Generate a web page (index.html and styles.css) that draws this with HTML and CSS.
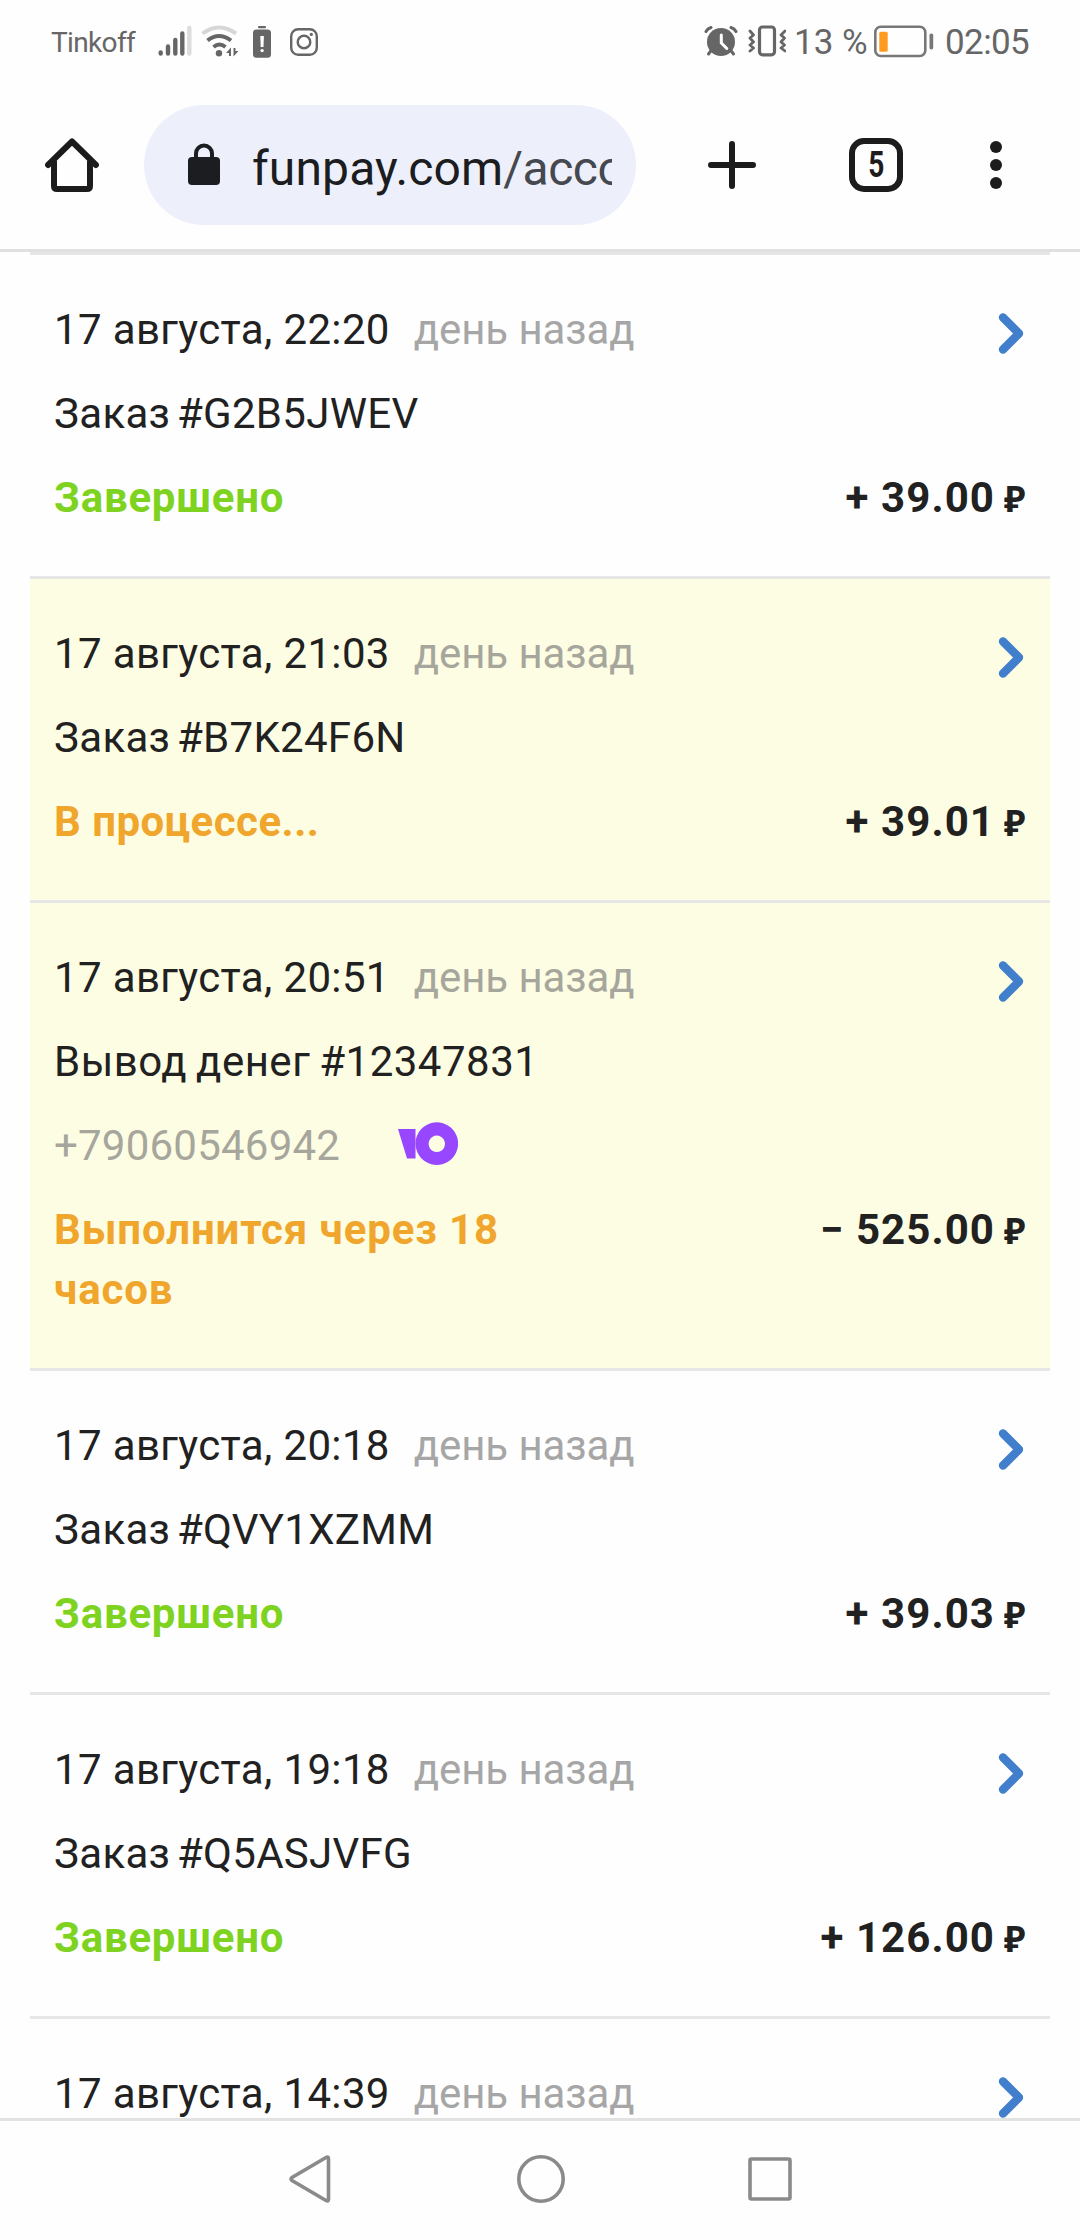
FILE: index.html
```html
<!DOCTYPE html>
<html lang="ru">
<head>
<meta charset="utf-8">
<title>FunPay</title>
<link rel="stylesheet" href="styles.css">
</head>
<body>
<svg class="sprite" aria-hidden="true">
  <symbol id="chevron" viewBox="0 0 28 52"><path d="M5 13.5 21 29.5 5 45.5" fill="none" stroke="#417fcc" stroke-width="8.4" stroke-linecap="round" stroke-linejoin="round"/></symbol>
</svg>
<div class="screen">
  <header class="status-bar">
    <div class="status-left">
      <span class="carrier">Tinkoff</span>
      <svg class="signal" width="34" height="36" viewBox="158 22 34 36" fill="none" stroke="#666" stroke-width="4.4" stroke-linecap="round">
        <path d="M160.7 51.5v1M168 45.500v7M175.300 39v13.500M182.300 32.500v20"/><path d="M189.300 27v25.500" stroke="#dcdcdc"/>
      </svg>
      <svg class="wifi" width="40" height="36" viewBox="200 22 40 36" fill="none" stroke="#666" stroke-width="4">
        <path d="M202.500 32.500Q219 20.500 236 32.500" stroke="#d6d6d6"/>
        <path d="M207.500 39.500Q219 30.500 231 39.500M213.500 46Q219.500 41 225.500 46"/>
        <circle cx="219" cy="52.300" r="3.200" fill="#666" stroke="none"/>
        <path d="M226 52l5-5.500V55h-2v-3zM238.500 50l-5 5.500V47h2v3z" fill="#666" stroke="none"/>
      </svg>
      <svg class="battery-alert" width="20" height="36" viewBox="252 22 20 36">
        <rect x="258" y="25" width="8" height="2.200" rx="1" fill="#666"/><rect x="253" y="28.500" width="18" height="28.300" rx="3.500" fill="#666"/>
        <path d="M260.300 35h3.600l-.4 11h-2.800z" fill="#fff"/><circle cx="262.100" cy="49.600" r="1.700" fill="#fff"/>
      </svg>
      <svg class="insta" width="30" height="36" viewBox="289 22 30 36" fill="none" stroke="#666" stroke-width="2.400">
        <rect x="291.200" y="28.200" width="25.600" height="25.600" rx="7"/><circle cx="304" cy="41" r="6.300"/><circle cx="311.300" cy="33.400" r="1.600" fill="#666" stroke="none"/>
      </svg>
    </div>
    <div class="status-right">
      <svg class="alarm" width="34" height="36" viewBox="704 22 34 36" fill="none" stroke="#666" stroke-width="3" stroke-linecap="round">
        <circle cx="721" cy="41" r="14" fill="#666" stroke="none"/>
        <path d="M706 30.500Q707.500 27.500 711 26.500M731 26.500Q734.500 27.500 736 30.500M711.500 49l-3 4M730.500 49l3 4"/>
        <path d="M721.300 34v8l5.500 5.500" stroke="#fff"/>
      </svg>
      <svg class="vibrate" width="38" height="36" viewBox="748 22 38 36" fill="none" stroke="#666" stroke-width="2.800" stroke-linejoin="round" stroke-linecap="round">
        <rect x="759.500" y="26" width="15" height="27.800" rx="3" stroke-width="3.200"/>
        <path d="M750 30l3.500 4-3.500 3 3.500 4-3.500 3 3.500 3-3.500 3M785 30l-4 4 3.500 3-3.500 4 3.500 3-3.500 3 4 3"/>
      </svg>
      <span class="percent">13 %</span>
      <svg class="battery" width="62" height="36" viewBox="873 22 62 36">
        <rect x="875.300" y="25.800" width="50" height="29.200" rx="5.500" fill="none" stroke="#777" stroke-width="2.600"/>
        <rect x="879.300" y="30.700" width="8.400" height="20" rx="1.500" fill="#ff9a1f"/><rect x="929.500" y="32.500" width="3.700" height="16" rx="1.800" fill="#777"/>
      </svg>
      <span class="clock">02:05</span>
    </div>
  </header>
  <nav class="toolbar">
    <svg class="home" width="54" height="54" viewBox="45 138 54 54" fill="none" stroke="#1c1c1c" stroke-width="6" stroke-linecap="round" stroke-linejoin="round">
      <path d="M48 165 72 141.500 96 165" /><path d="M54 161v25q0 3 3 3h30q3 0 3-3v-25" stroke-linecap="butt"/>
    </svg>
    <div class="address">
      <svg class="lock" width="32" height="42" viewBox="188 143 32 42">
        <rect x="188" y="157" width="32" height="28" rx="4" fill="#1b1d20"/><path d="M196 159v-5.500a8 8 0 0 1 16 0v5.500" fill="none" stroke="#1b1d20" stroke-width="4"/>
      </svg>
      <div class="url">funpay.com<span class="path">/acco</span></div>
    </div>
    <svg class="plus" width="48" height="48" viewBox="0 0 48 48"><path d="M24 3v42M3 24h42" stroke="#1c1c1c" stroke-width="6" stroke-linecap="round"/></svg>
    <div class="tabs"><span>5</span></div>
    <svg class="menu" width="12" height="48" viewBox="0 0 12 48" fill="#1c1c1c"><circle cx="6" cy="6" r="6"/><circle cx="6" cy="24" r="6"/><circle cx="6" cy="42" r="6"/></svg>
  </nav>
  <main class="list">
    <article class="row">
      <div class="line"><div class="date">17 августа, 22:20<span class="ago">день назад</span></div><svg class="chevron"><use href="#chevron"/></svg></div>
      <div class="title">Заказ #G2B5JWEV</div>
      <div class="line"><div class="state done">Завершено</div><div class="sum">+ 39.00<span class="rub">₽</span></div></div>
    </article>
    <article class="row pending">
      <div class="line"><div class="date">17 августа, 21:03<span class="ago">день назад</span></div><svg class="chevron"><use href="#chevron"/></svg></div>
      <div class="title">Заказ #B7K24F6N</div>
      <div class="line"><div class="state wait">В процессе...</div><div class="sum">+ 39.01<span class="rub">₽</span></div></div>
    </article>
    <article class="row pending">
      <div class="line"><div class="date">17 августа, 20:51<span class="ago">день назад</span></div><svg class="chevron"><use href="#chevron"/></svg></div>
      <div class="title wide">Вывод денег #12347831</div>
      <div class="wallet">+79060546942
        <svg class="yoo" width="60" height="48" viewBox="398 1122 60 48" fill="#9747ff"><path d="M398 1129h17.500v29.400H407z"/><path fill-rule="evenodd" d="M436.800 1122.300a21.300 21.300 0 1 0 .01 0zM436.800 1135.600a8.200 8.200 0 1 1-.01 0z"/></svg>
      </div>
      <div class="line"><div class="state wait long">Выполнится через 18 часов</div><div class="sum">− 525.00<span class="rub">₽</span></div></div>
    </article>
    <article class="row">
      <div class="line"><div class="date">17 августа, 20:18<span class="ago">день назад</span></div><svg class="chevron"><use href="#chevron"/></svg></div>
      <div class="title">Заказ #QVY1XZMM</div>
      <div class="line"><div class="state done">Завершено</div><div class="sum">+ 39.03<span class="rub">₽</span></div></div>
    </article>
    <article class="row">
      <div class="line"><div class="date">17 августа, 19:18<span class="ago">день назад</span></div><svg class="chevron"><use href="#chevron"/></svg></div>
      <div class="title">Заказ #Q5ASJVFG</div>
      <div class="line"><div class="state done">Завершено</div><div class="sum">+ 126.00<span class="rub">₽</span></div></div>
    </article>
    <article class="row">
      <div class="line"><div class="date">17 августа, 14:39<span class="ago">день назад</span></div><svg class="chevron"><use href="#chevron"/></svg></div>
    </article>
  </main>
  <footer class="system-nav">
    <svg width="42" height="48" viewBox="0 0 42 48"><path d="M39.500 4v40q0 3-2.500 1.500L3 25.500Q1 24 3 22.500L37 2.500Q39.500 1 39.500 4z"/></svg>
    <svg width="48" height="48" viewBox="0 0 48 48"><circle cx="24" cy="24" r="22.200"/></svg>
    <svg class="recents" width="44" height="44" viewBox="0 0 44 44"><rect x="2" y="2" width="40" height="40" rx="1.500"/></svg>
  </footer>
</div>
</body>
</html>
```
FILE: styles.css
```css
* { box-sizing: border-box; }
body { margin: 0; background: #fefefe; color: #212121; font-family: Roboto, "Noto Sans", sans-serif; }
svg { display: block; flex: none; }
.sprite { display: none; }
.screen { display: flex; flex-direction: column; width: 1080px; height: 2240px; overflow: hidden; }

.status-bar { display: flex; justify-content: space-between; height: 81px; padding: 0 50px 0 51px; color: #666; }
.status-left, .status-right { display: flex; align-items: center; white-space: nowrap; }
.carrier { width: 107px; padding-top: 4px; font-size: 28px; letter-spacing: -.65px; }
.wifi { margin-left: 8px; }
.battery-alert { margin-left: 12px; }
.insta { margin-left: 17px; }
.vibrate { margin-left: 10px; }
.percent { margin-left: 8px; width: 79px; padding-top: 3px; font-size: 35px; }
.clock { width: 85px; margin-left: 10px; padding-top: 3px; font-size: 35px; letter-spacing: -.6px; }

.toolbar { display: flex; align-items: center; height: 171px; padding-left: 45px; border-bottom: 3px solid #e0e0e0; flex: none; }
.address { display: flex; align-items: center; width: 492px; height: 120px; margin-left: 45px; padding: 0 24px 0 44px; border-radius: 60px; background: #edf0fa; }
.lock { margin-top: -2px; }
.url { flex: 1; min-width: 0; margin-left: 32px; padding-top: 7px; overflow: hidden; white-space: nowrap; font-size: 48px; letter-spacing: .14px; color: #1b1d20; }
.path { color: #45484e; letter-spacing: -.5px; }
.plus { margin-left: 72px; }
.tabs { display: flex; align-items: center; justify-content: center; width: 54px; height: 54px; margin-left: 93px; border: 6px solid #1c1c1c; border-radius: 15px; font-size: 36px; font-weight: 700; color: #1c1c1c; }
.tabs span { transform: scaleX(.78); }
.menu { margin-left: 87px; }

.list { flex: 1; min-height: 0; overflow: hidden; padding: 0 30px; font-size: 42px; line-height: 60px; }
.row { display: flex; flex-direction: column; gap: 24px; padding: 45px 24px 48px; border-top: 3px solid #e6e6e6; }
.pending { background: #fdfde3; }
.line { display: flex; justify-content: space-between; white-space: nowrap; }
.date { letter-spacing: .36px; }
.ago { margin-left: 24px; color: #a6a6a6; letter-spacing: -.1px; }
.pending .ago, .wallet { color: #a6a69c; }
.chevron { width: 28px; height: 52px; margin-top: 4px; }
.title { letter-spacing: .3px; word-spacing: -4px; }
.title.wide { letter-spacing: .5px; word-spacing: -2px; }
.wallet { display: flex; align-items: center; height: 60px; gap: 58px; letter-spacing: .22px; }
.state { max-width: 486px; font-weight: 700; letter-spacing: .75px; white-space: normal; }
.state.wait { letter-spacing: .45px; }
.state.wait.long { letter-spacing: .87px; }
.done { color: #7ed321; }
.wait { color: #f0a62c; }
.sum { font-weight: 700; letter-spacing: 1.07px; }
.rub { display: inline-block; width: 22px; margin-left: 9px; font-family: "Noto Sans", sans-serif; font-size: 35.5px; line-height: 1; letter-spacing: 0; }

.system-nav { display: flex; align-items: center; justify-content: center; gap: 186px; height: 122px; padding-bottom: 3px; border-top: 3px solid #e2e2e2; flex: none; }
.system-nav svg { fill: none; stroke: #8a8a8a; stroke-width: 3.6; }
.system-nav .recents { margin-left: -3px; }
```
